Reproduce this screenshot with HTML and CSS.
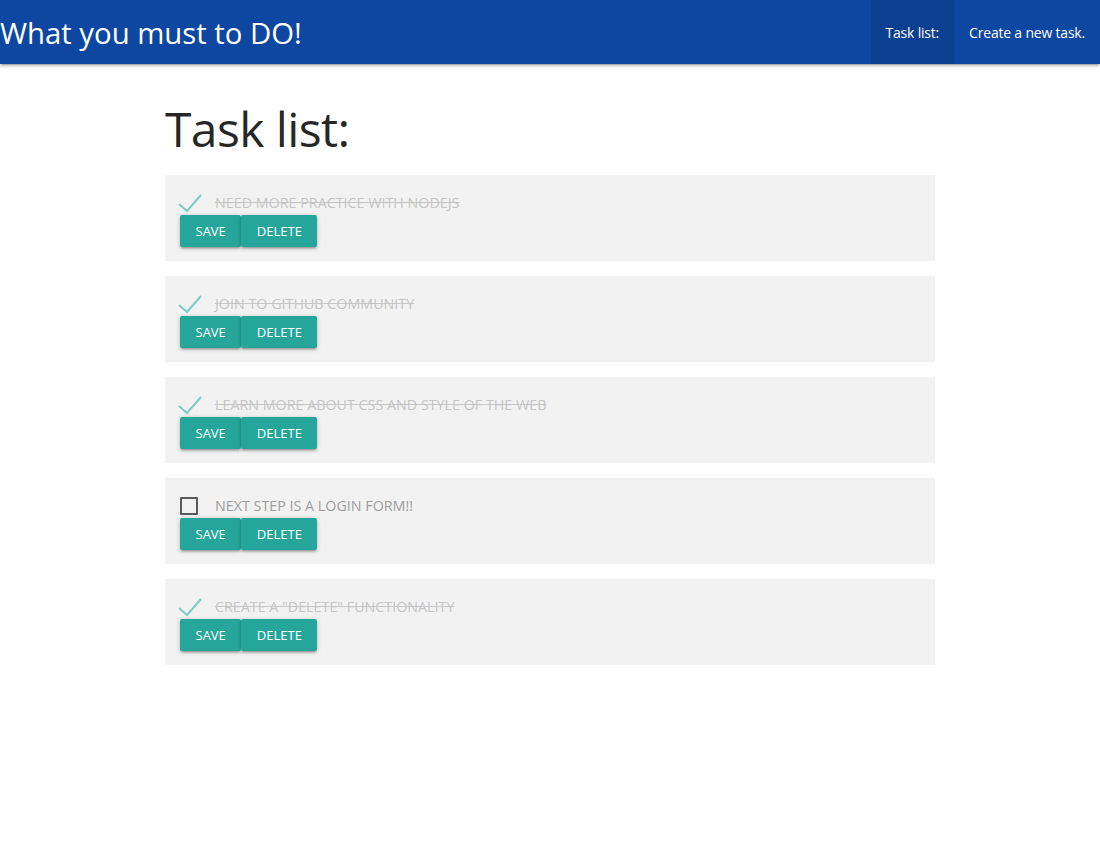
FILE: index.html
```html
<!DOCTYPE html>
<html>
<head>
<meta charset="utf-8">
<link rel="stylesheet" href="styles.css">
</head>
<body>
<nav class="nav">
  <a class="brand" href="#">What you must to DO!</a>
  <ul class="links">
    <li class="active"><a href="#">Task list:</a></li>
    <li><a href="#">Create a new task.</a></li>
  </ul>
</nav>
<main class="container">
  <h2 class="title">Task list:</h2>
  <div class="task">
    <div class="row"><svg class="check" width="26" height="20" viewBox="0 0 26 20"><polyline points="2,11 10,18 24,2"/></svg><span class="text done">Need more practice with NodeJS</span></div>
    <div class="btns"><button class="btn">Save</button><button class="btn">Delete</button></div>
  </div>
  <div class="task">
    <div class="row"><svg class="check" width="26" height="20" viewBox="0 0 26 20"><polyline points="2,11 10,18 24,2"/></svg><span class="text done">Join to GitHub community</span></div>
    <div class="btns"><button class="btn">Save</button><button class="btn">Delete</button></div>
  </div>
  <div class="task">
    <div class="row"><svg class="check" width="26" height="20" viewBox="0 0 26 20"><polyline points="2,11 10,18 24,2"/></svg><span class="text done">Learn more about CSS and style of the web</span></div>
    <div class="btns"><button class="btn">Save</button><button class="btn">Delete</button></div>
  </div>
  <div class="task">
    <div class="row"><span class="box"></span><span class="text">Next step is a login form!!</span></div>
    <div class="btns"><button class="btn">Save</button><button class="btn">Delete</button></div>
  </div>
  <div class="task">
    <div class="row"><svg class="check" width="26" height="20" viewBox="0 0 26 20"><polyline points="2,11 10,18 24,2"/></svg><span class="text done">Create a "delete" functionality</span></div>
    <div class="btns"><button class="btn">Save</button><button class="btn">Delete</button></div>
  </div>
</main>
</body>
</html>
```
FILE: styles.css
```css
* { box-sizing: border-box; }
body {
  margin: 0;
  font-family: "Open Sans", "Noto Sans", sans-serif;
  color: rgba(0,0,0,0.87);
  background: #fff;
}
.nav {
  height: 64px;
  background: #0d47a1;
  display: flex;
  justify-content: space-between;
  align-items: stretch;
  box-shadow: 0 2px 2px 0 rgba(0,0,0,.14), 0 3px 1px -2px rgba(0,0,0,.12), 0 1px 5px 0 rgba(0,0,0,.2);
}
.brand {
  color: #fff;
  text-decoration: none;
  font-size: 29.3px;
  line-height: 66px;
  letter-spacing: 0;
}
.links {
  list-style: none;
  margin: 0;
  padding: 0;
  display: flex;
}
.links li a {
  display: block;
  padding: 0 15px;
  line-height: 66px;
  color: #fff;
  text-decoration: none;
  font-size: 14px;
  letter-spacing: -0.2px;
}
.links li.active { background: rgba(0,0,0,0.1); }
.container {
  width: 770px;
  margin: 0 auto;
}
.title {
  font-weight: 400;
  font-size: 48px;
  line-height: 60px;
  margin: 35px 0 16px;
  letter-spacing: -0.6px;
}
.task {
  background: #f2f2f2;
  padding: 15px 15px 14px;
  margin-bottom: 15px;
  height: 86px;
}
.row {
  height: 25px;
  display: flex;
  align-items: center;
}
.check {
  width: 26px;
  height: 20px;
  margin-left: -3px;
  margin-right: 12px;
  fill: none;
  stroke: #7ecdc5;
  stroke-width: 2;
}
.box {
  width: 18px;
  height: 18px;
  border: 2px solid #5a5a5a;
  border-radius: 1px;
  margin-right: 17px;
}
.text {
  font-size: 14.3px;
  text-transform: uppercase;
  color: #9e9e9e;
  letter-spacing: 0;
}
.text.done {
  color: #c6c6c6;
  text-decoration: line-through;
}
.btns { display: flex; }
.btn {
  height: 32px;
  border: none;
  border-radius: 2px;
  background: #26a69a;
  color: #fff;
  font-family: inherit;
  font-size: 13px;
  text-transform: uppercase;
  padding: 0 15.5px;
  letter-spacing: 0;
  box-shadow: 0 2px 2px 0 rgba(0,0,0,.14), 0 3px 1px -2px rgba(0,0,0,.12), 0 1px 5px 0 rgba(0,0,0,.2);
  cursor: pointer;
}
```
